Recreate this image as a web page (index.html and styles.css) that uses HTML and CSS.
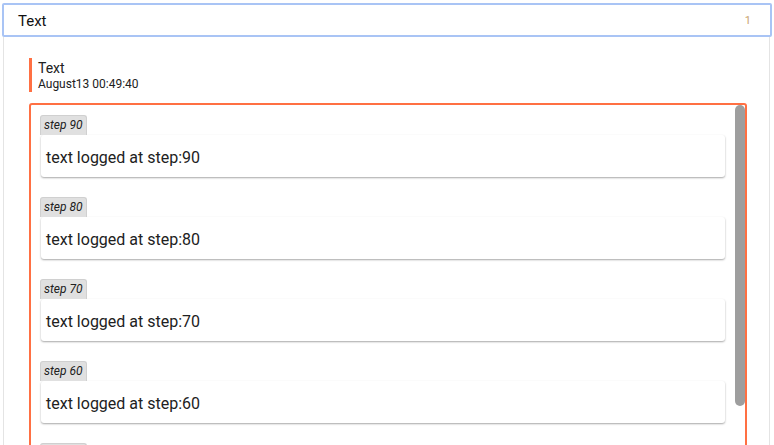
FILE: index.html
```html
<!DOCTYPE html>
<html>
<head>
<meta charset="utf-8">
<link rel="stylesheet" href="styles.css">
</head>
<body>
<div class="header">
  <span class="header-title">Text</span>
  <span class="header-count">1</span>
</div>
<div class="panel">
  <div class="run-title">
    <div class="run-name">Text</div>
    <div class="run-date">August13 00:49:40</div>
  </div>
  <div class="log-box">
    <div class="log-scroll">
      <div class="entry"><div class="tag">step 90</div><div class="card">text logged at step:90</div></div>
      <div class="entry"><div class="tag">step 80</div><div class="card">text logged at step:80</div></div>
      <div class="entry"><div class="tag">step 70</div><div class="card">text logged at step:70</div></div>
      <div class="entry"><div class="tag">step 60</div><div class="card">text logged at step:60</div></div>
      <div class="entry"><div class="tag">step 50</div><div class="card">text logged at step:50</div></div>
      <div class="entry"><div class="tag">step 40</div><div class="card">text logged at step:40</div></div>
      <div class="entry"><div class="tag">step 30</div><div class="card">text logged at step:30</div></div>
      <div class="entry"><div class="tag">step 20</div><div class="card">text logged at step:20</div></div>
      <div class="entry"><div class="tag">step 10</div><div class="card">text logged at step:10</div></div>
      <div class="entry"><div class="tag">step 0</div><div class="card">text logged at step:0</div></div>
    </div>
    <div class="scroll-thumb"></div>
  </div>
</div>
</body>
</html>
```
FILE: styles.css
```css
html, body {
  margin: 0;
  padding: 0;
  background: #ffffff;
  font-family: Roboto, "Noto Sans", sans-serif;
  color: #212121;
  overflow: hidden;
}

.header {
  margin: 3px 2px 0 2px;
  height: 30px;
  border: 2px solid #a9c4f5;
  border-radius: 2px;
  padding: 0 19px 0 14px;
  display: flex;
  align-items: center;
  justify-content: space-between;
}

.header-title {
  font-size: 15px;
  color: #111;
  padding-top: 1px;
}

.header-count {
  font-size: 11px;
  color: #c9a46e;
}

.panel {
  margin: 0 4px 0 3px;
  border-left: 1px solid #e4e4e4;
  border-right: 1px solid #e4e4e4;
  padding: 21px 22px 0 25px;
}

.run-title {
  border-left: 3px solid #ff7043;
  padding-left: 6px;
  height: 34px;
  display: flex;
  flex-direction: column;
  justify-content: center;
}

.run-name {
  font-size: 14px;
  line-height: 17px;
  padding-top: 1px;
}

.run-date {
  font-size: 12px;
  line-height: 14px;
}

.log-box {
  position: relative;
  margin-top: 11px;
  border: 2px solid #ff7043;
  border-radius: 3px;
  overflow: hidden;
}

.log-scroll {
  height: 500px;
  overflow: hidden;
  padding: 10px 20px 0 9px;
  box-sizing: border-box;
}

.scroll-thumb {
  position: absolute;
  top: 0;
  right: 0;
  width: 10px;
  height: 301px;
  background: #9e9e9e;
  border-radius: 5px;
}

.entry {
  margin-bottom: 20px;
}

.tag {
  display: inline-block;
  font-size: 12px;
  font-style: italic;
  line-height: 19px;
  padding: 0 3px;
  background: #e0e0e0;
  border: 1px solid #d0d0d0;
  border-bottom: none;
  border-radius: 3px 3px 0 0;
  color: #212121;
  vertical-align: bottom;
}

.card {
  height: 42px;
  display: flex;
  align-items: center;
  padding: 2px 5px 0 5px;
  box-sizing: border-box;
  font-size: 16px;
  background: #fff;
  border-radius: 3px;
  box-shadow: 0 1px 2px rgba(0, 0, 0, 0.35);
  margin-left: 1px;
}
```
